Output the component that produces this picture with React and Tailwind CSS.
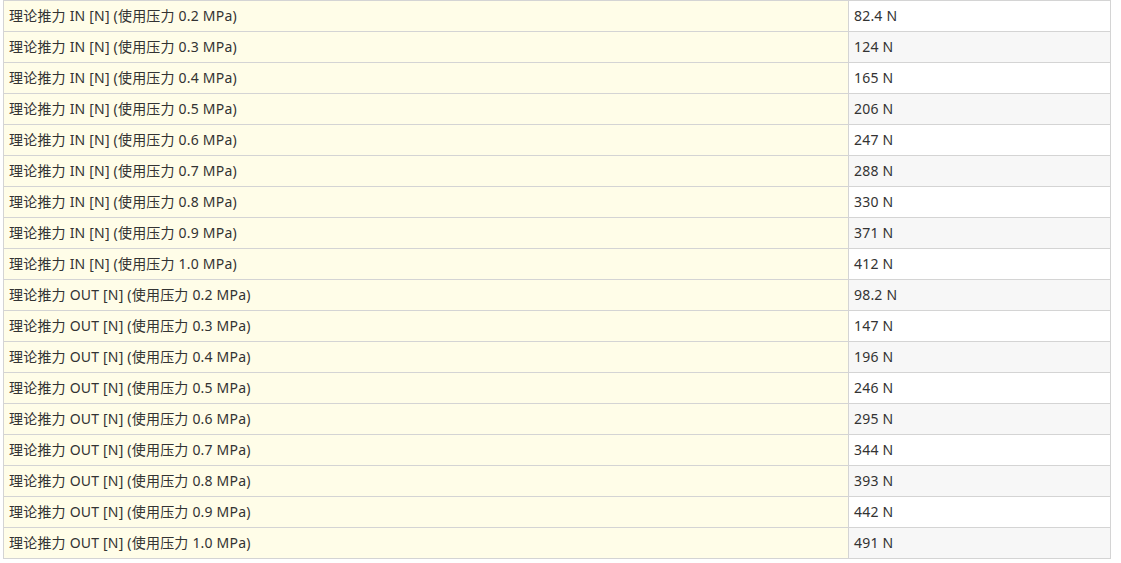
const rows = [
  ["IN", "0.2", "82.4 N"],
  ["IN", "0.3", "124 N"],
  ["IN", "0.4", "165 N"],
  ["IN", "0.5", "206 N"],
  ["IN", "0.6", "247 N"],
  ["IN", "0.7", "288 N"],
  ["IN", "0.8", "330 N"],
  ["IN", "0.9", "371 N"],
  ["IN", "1.0", "412 N"],
  ["OUT", "0.2", "98.2 N"],
  ["OUT", "0.3", "147 N"],
  ["OUT", "0.4", "196 N"],
  ["OUT", "0.5", "246 N"],
  ["OUT", "0.6", "295 N"],
  ["OUT", "0.7", "344 N"],
  ["OUT", "0.8", "393 N"],
  ["OUT", "0.9", "442 N"],
  ["OUT", "1.0", "491 N"],
];

export default function App() {
  return (
    <div className="bg-white min-h-screen pl-[3px] pr-[10px] text-[14px] text-[#333] tracking-[0.2px] [font-family:'Noto_Sans','Noto_Sans_CJK_SC',sans-serif]">
      <table className="w-[1108px] border-collapse table-fixed">
        <tbody>
          {rows.map(([dir, p, val], i) => (
            <tr key={i} className="h-[31px]">
              <td className="w-[845px] border border-[#d4d4d4] bg-[#fffde8] px-[5px] py-0 leading-[30px]">
                理论推力 {dir} [N] (使用压力 {p} MPa)
              </td>
              <td
                className={`border border-[#d4d4d4] px-[5px] py-0 leading-[30px] ${
                  i % 2 === 0 ? "bg-white" : "bg-[#f7f7f7]"
                }`}
              >
                {val}
              </td>
            </tr>
          ))}
        </tbody>
      </table>
    </div>
  );
}
